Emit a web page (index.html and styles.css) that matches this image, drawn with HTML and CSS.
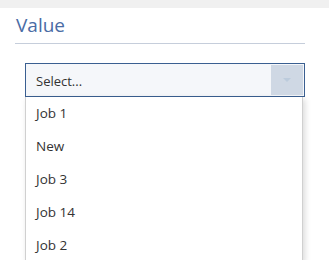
FILE: index.html
```html
<!DOCTYPE html>
<html>
<head>
<meta charset="utf-8">
<link rel="stylesheet" href="styles.css">
</head>
<body>
<div class="topbar"></div>
<div class="panel">
  <h2 class="title">Value</h2>
  <div class="field">
    <div class="select">
      <span class="placeholder">Select...</span>
      <span class="arrow"><span class="tri"></span></span>
    </div>
    <ul class="menu">
      <li>Job 1</li>
      <li>New</li>
      <li>Job 3</li>
      <li>Job 14</li>
      <li>Job 2</li>
    </ul>
  </div>
</div>
</body>
</html>
```
FILE: styles.css
```css
html, body {
  margin: 0;
  padding: 0;
  background: #ffffff;
  font-family: "Open Sans", "Noto Sans", sans-serif;
  overflow: hidden;
}
.topbar {
  height: 8px;
  background: #f0f0f0;
}
.panel {
  padding: 0 24px 0 15px;
}
.title {
  margin: 0;
  font-weight: 400;
  font-size: 19px;
  line-height: 28px;
  padding-top: 3px;
  padding-bottom: 4px;
  padding-left: 1px;
  color: #4a6ca5;
  border-bottom: 1px solid #c6cedb;
}
.field {
  padding: 19px 0 0 10px;
}
.select {
  display: flex;
  align-items: stretch;
  height: 30px;
  border: 1px solid #3a5f91;
  background: #f5f7fa;
  padding: 1px;
}
.placeholder {
  flex: 1;
  display: flex;
  align-items: center;
  padding-left: 9px;
  padding-top: 2px;
  font-size: 13px;
  color: #333;
}
.arrow {
  width: 32px;
  background: #cfd8e4;
  display: flex;
  align-items: center;
  justify-content: center;
}
.tri {
  width: 0;
  height: 0;
  border-left: 4px solid transparent;
  border-right: 4px solid transparent;
  border-top: 4px solid #bccbdc;
}
.menu {
  list-style: none;
  margin: 0 2px 0 0;
  padding: 0;
  background: #fff;
  border-left: 1px solid #d0d0d0;
  border-right: 1px solid #d0d0d0;
  box-shadow: 2px 2px 6px rgba(0, 0, 0, 0.15);
}
.menu li {
  height: 33px;
  line-height: 33px;
  padding-left: 10px;
  font-size: 13.5px;
  color: #333;
}
```
